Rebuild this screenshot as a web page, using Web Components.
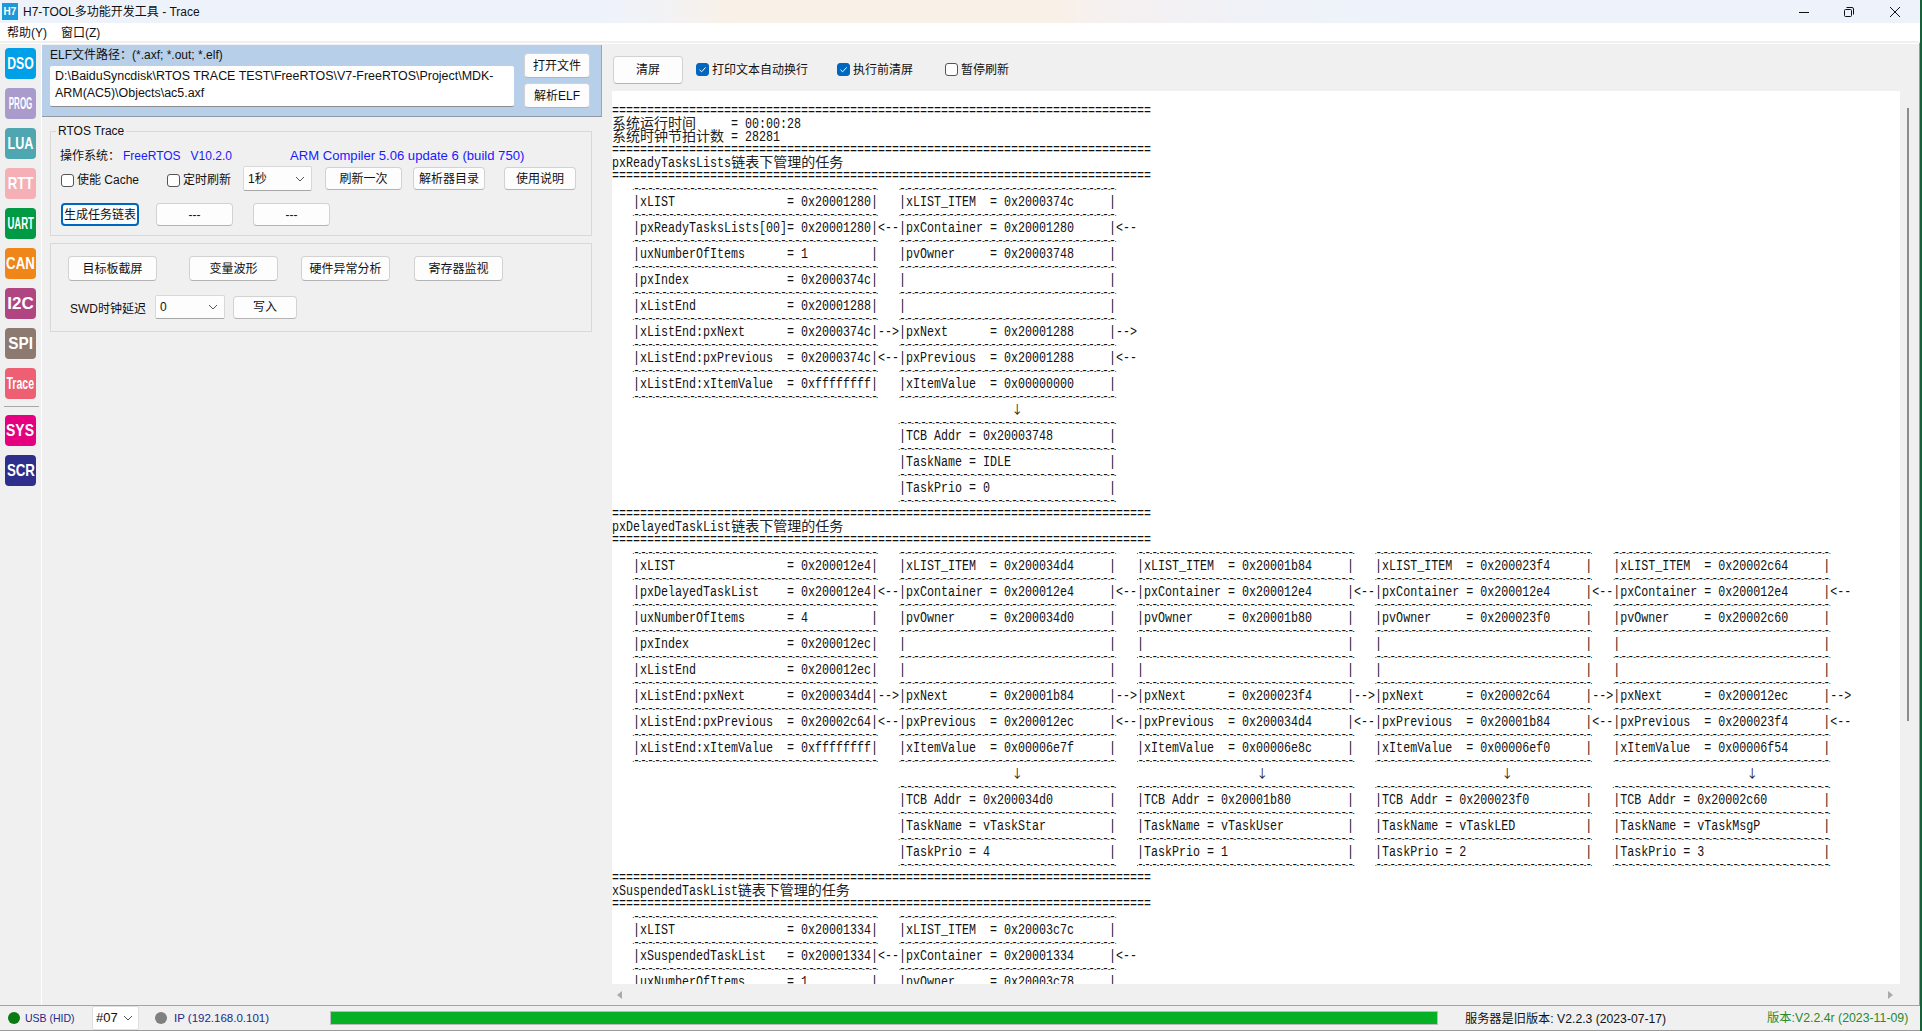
<!DOCTYPE html>
<html lang="zh"><head><meta charset="utf-8"><title>H7-TOOL</title>
<style>
html,body{margin:0;padding:0;height:100%;overflow:hidden;background:#f0f0f0}
body{font:12px/16px "Liberation Sans","Noto Sans CJK SC",sans-serif;color:#111}
</style></head><body>
<h7-app></h7-app>
<script>
function def(name, css, html, init){
  customElements.define(name, class extends HTMLElement{
    connectedCallback(){
      if(this.shadowRoot) return;
      const r=this.attachShadow({mode:'open'});
      r.innerHTML='<style>'+css+'</style>'+(typeof html==='function'?html(this):html);
      if(init) init(this,r);
    }
  });
}
const attr=(e,n,d='')=>e.getAttribute(n)??d;

def('h7-btn',`:host{display:flex;align-items:center;justify-content:center;box-sizing:border-box;background:#fdfdfd;border:1px solid #d2d2d2;border-bottom-color:#b4b4b4;border-radius:4px;font-size:12px;color:#111}
:host([focus]){border:2px solid #0067c0;background:#fafcff}`,`<slot></slot>`);

def('h7-check',`:host{display:inline-flex;align-items:center;gap:3px;font-size:12px}
.b{box-sizing:border-box;width:13px;height:13px;border:1px solid #555;border-radius:3px;background:#fff;display:block}
:host([on]) .b{background:#0067c0;border-color:#0067c0}svg{display:block}`,
e=>`<span class="b">${e.hasAttribute('on')?'<svg width="11" height="11" viewBox="0 0 11 11"><path d="M2.5 5.8 4.6 7.8 8.6 3.4" fill="none" stroke="#fff" stroke-width="1"/></svg>':''}</span><slot></slot>`);

def('h7-select',`:host{display:flex;align-items:center;justify-content:space-between;box-sizing:border-box;background:#fdfdfd;border:1px solid #d8d8d8;border-bottom-color:#a8a8a8;border-radius:2px;padding:0 6px 0 4px;font-size:12px}`,
`<slot></slot><svg width="10" height="6" viewBox="0 0 10 6"><path d="M1 1 5 5 9 1" fill="none" stroke="#555" stroke-width="1"/></svg>`);

def('h7-tile',`:host{display:flex;align-items:center;justify-content:center;width:31px;height:31px;border-radius:4px;overflow:hidden;color:#fff;font:bold 17px/17px "Liberation Sans",sans-serif;background:var(--c)}
span{display:block;white-space:nowrap}`,
e=>`<span style="transform:scaleX(${attr(e,'sx','1')});font-size:${attr(e,'fs','17')}px"><slot></slot></span>`);

def('h7-titlebar',`:host{display:flex;align-items:center;height:23px;flex:none;background:linear-gradient(90deg,#eef3fb 0,#eef3fb 600px,#f3f2f4 670px,#f9f1e7 733px,#f9f1e7 1056px,#f6f0f0 1100px,#eff2f8 1270px,#eef3fb 1400px)}
.logo{width:16px;height:17px;margin-left:2px;background:#1a9ad6;color:#fff;font:bold 10px/17px "Liberation Sans",sans-serif;text-align:center}
.t{margin-left:5px;flex:1}
.w{display:flex;margin-right:22px;align-items:center}
svg{display:block}`,
`<span class="logo">H7</span><span class="t">H7-TOOL多功能开发工具 - Trace</span>
<div class="w">
<svg width="10" height="10" viewBox="0 0 10 10" style="margin-right:35px"><path d="M0 5.5H10" stroke="#111"/></svg>
<svg width="10" height="10" viewBox="0 0 10 10" style="margin-right:36px"><rect x=".5" y="2.5" width="7" height="7" rx="1" fill="none" stroke="#111"/><path d="M2.5 .5H8a1.5 1.5 0 0 1 1.5 1.5V7.5" fill="none" stroke="#111"/></svg>
<svg width="10" height="10" viewBox="0 0 10 10"><path d="M0 0 10 10M10 0 0 10" stroke="#111" stroke-width="1"/></svg>
</div>`);

def('h7-menubar',`:host{display:flex;gap:14px;flex:none;background:#fff;padding:2px 0 0 7px;box-sizing:border-box;height:20px;align-items:center;border-bottom:2px solid #f0f0f0}`,`<slot></slot>`);

def('h7-sidebar',`:host{display:flex;flex-direction:column;align-items:flex-start;gap:9px;box-sizing:border-box;width:42px;flex:none;border-right:1px solid #fff;padding:4px 0 0 5px}`,`<slot></slot>`);

def('h7-sep',`:host{display:block;width:35px;height:1px;background:#a8a8a8;margin:-2px 0 -1px -1px}`,``);

def('h7-elf',`:host{display:flex;box-sizing:border-box;width:560px;height:72px;background:#b8cfe9;border-right:1px solid #9aa6b4;border-bottom:1px solid #8f98a3;padding:0 11px 0 8px}
.l{width:464px;display:flex;flex-direction:column}
.c{height:21px;line-height:20px}
.box{box-sizing:border-box;height:41px;background:#fff;border-bottom:1px solid #8d8d8d;border-radius:2px;padding:2px 5px;line-height:17px;font-size:12.45px}
.r{margin-left:10px;display:flex;flex-direction:column;gap:5px;padding-top:8px;width:66px}
h7-btn{height:25px}`,
`<div class="l"><div class="c">ELF文件路径：(*.axf; *.out; *.elf)</div>
<div class="box">D:\\BaiduSyncdisk\\RTOS TRACE TEST\\FreeRTOS\\V7-FreeRTOS\\Project\\MDK-<br>ARM(AC5)\\Objects\\ac5.axf</div></div>
<div class="r"><h7-btn>打开文件</h7-btn><h7-btn>解析ELF</h7-btn></div>`);

def('h7-group',`:host{display:block;box-sizing:border-box;border:1px solid #d8d8d8;margin-left:8px;width:542px}
.lg{display:block;width:max-content;background:#f0f0f0;padding:0 2px;margin:-9px 0 0 5px;height:16px;line-height:16px;font-size:12px}`,
e=>(e.hasAttribute('legend')?`<span class="lg">${attr(e,'legend')}</span>`:'')+`<slot></slot>`);

def('h7-row',`:host{display:flex;align-items:center}`,`<slot></slot>`);

const blue='color:#1a1aff';
def('h7-left',`:host{display:block;width:570px;flex:none;padding-top:1px}
h7-btn{flex:none}
.g1{margin-top:14px;height:105px;padding:0}
.g2{margin-top:7px;height:89px}`,
`<h7-elf></h7-elf>
<h7-group class="g1" legend="RTOS Trace">
  <h7-row style="margin:8px 0 0 9px;height:17px"><span>操作系统：</span><span style="${blue};margin-left:3px">FreeRTOS</span><span style="${blue};margin-left:10px">V10.2.0</span><span style="${blue};margin-left:58px;font-size:13.1px">ARM Compiler 5.06 update 6 (build 750)</span></h7-row>
  <h7-row style="margin:2px 0 0 10px;height:25px">
    <h7-check style="margin-top:3px">使能 Cache</h7-check>
    <h7-check style="margin:3px 0 0 28px">定时刷新</h7-check>
    <h7-select style="margin-left:12px;width:69px;height:25px">1秒</h7-select>
    <h7-btn style="margin-left:13px;width:77px;height:23px">刷新一次</h7-btn>
    <h7-btn style="margin-left:11px;width:72px;height:23px">解析器目录</h7-btn>
    <h7-btn style="margin-left:19px;width:72px;height:23px">使用说明</h7-btn>
  </h7-row>
  <h7-row style="margin:12px 0 0 10px;height:23px">
    <h7-btn focus style="width:78px;height:23px">生成任务链表</h7-btn>
    <h7-btn style="margin-left:17px;width:77px;height:23px">---</h7-btn>
    <h7-btn style="margin-left:20px;width:77px;height:23px">---</h7-btn>
  </h7-row>
</h7-group>
<h7-group class="g2">
  <h7-row style="margin:12px 0 0 17px;height:25px">
    <h7-btn style="width:89px;height:25px">目标板截屏</h7-btn>
    <h7-btn style="margin-left:32px;width:89px;height:25px">变量波形</h7-btn>
    <h7-btn style="margin-left:23px;width:89px;height:25px">硬件异常分析</h7-btn>
    <h7-btn style="margin-left:24px;width:89px;height:25px">寄存器监视</h7-btn>
  </h7-row>
  <h7-row style="margin:14px 0 0 19px;height:24px">
    <span style="width:85px;padding-top:3px">SWD时钟延迟</span>
    <h7-select style="width:70px;height:24px">0</h7-select>
    <h7-btn style="margin-left:8px;width:64px;height:23px">写入</h7-btn>
  </h7-row>
</h7-group>`);

def('h7-toolbar',`:host{display:flex;align-items:center;box-sizing:border-box;height:47px;flex:none;padding:4px 0 0 1px}
h7-btn{width:70px;height:28px}`,
`<h7-btn>清屏</h7-btn>
<h7-check on style="margin-left:13px">打印文本自动换行</h7-check>
<h7-check on style="margin-left:29px">执行前清屏</h7-check>
<h7-check style="margin-left:32px">暂停刷新</h7-check>`);

/* text-report content */
const pad=(s,n)=>(s+' '.repeat(n)).slice(0,n);
const eqs='='.repeat(77);
function section(title,head,items){
  const L=[eqs,title,eqs];
  const dash=' '.repeat(3)+'-'.repeat(35)+('   '+'-'.repeat(31)).repeat(items.length);
  const labels=['xLIST_ITEM','pxContainer','pvOwner','','','pxNext','pxPrevious','xItemValue'];
  const arrows=['   ','<--','   ','   ','   ','-->','<--','   '];
  L.push(dash);
  head.forEach((a,i)=>{
    const cells=items.map(it=>labels[i]?pad(pad(labels[i],11)+' = '+it[i],29):' '.repeat(29));
    let s='   |'+pad(a[0],21)+'= '+pad(a[1],10)+'|'+arrows[i];
    cells.forEach(c=>{s+='|'+c+'|'+arrows[i];});
    L.push(s.replace(/\s+$/,''));
    L.push(dash);
  });
  return L;
}
function tail(tasks){
  const dash=' '.repeat(41)+tasks.map(()=>'-'.repeat(31)).join('   ');
  const L=[];
  L.push(' '.repeat(57)+tasks.map(()=>'↓').join(' '.repeat(33)));
  L.push(dash);
  [0,1,2].forEach(k=>{
    const names=['TCB Addr = ','TaskName = ','TaskPrio = '];
    L.push(' '.repeat(41)+tasks.map(t=>'|'+pad(names[k]+t[k],29)+'|').join('   '));
    L.push(dash);
  });
  return L;
}
let lines=[''];
lines.push(eqs,'系统运行时间     = 00:00:28','系统时钟节拍计数 = 28281');
lines.push(...section('pxReadyTasksLists链表下管理的任务',
 [['xLIST','0x20001280'],['pxReadyTasksLists[00]','0x20001280'],['uxNumberOfItems','1'],['pxIndex','0x2000374c'],['xListEnd','0x20001288'],['xListEnd:pxNext','0x2000374c'],['xListEnd:pxPrevious','0x2000374c'],['xListEnd:xItemValue','0xffffffff']],
 [['0x2000374c','0x20001280','0x20003748','','','0x20001288','0x20001288','0x00000000']]));
lines.push(...tail([['0x20003748','IDLE','0']]));
const dl=[
 ['0x200034d4','0x200012e4','0x200034d0','','','0x20001b84','0x200012ec','0x00006e7f'],
 ['0x20001b84','0x200012e4','0x20001b80','','','0x200023f4','0x200034d4','0x00006e8c'],
 ['0x200023f4','0x200012e4','0x200023f0','','','0x20002c64','0x20001b84','0x00006ef0'],
 ['0x20002c64','0x200012e4','0x20002c60','','','0x200012ec','0x200023f4','0x00006f54']];
lines.push(...section('pxDelayedTaskList链表下管理的任务',
 [['xLIST','0x200012e4'],['pxDelayedTaskList','0x200012e4'],['uxNumberOfItems','4'],['pxIndex','0x200012ec'],['xListEnd','0x200012ec'],['xListEnd:pxNext','0x200034d4'],['xListEnd:pxPrevious','0x20002c64'],['xListEnd:xItemValue','0xffffffff']],dl));
lines.push(...tail([['0x200034d0','vTaskStar','4'],['0x20001b80','vTaskUser','1'],['0x200023f0','vTaskLED','2'],['0x20002c60','vTaskMsgP','3']]));
lines.push(...section('xSuspendedTaskList链表下管理的任务',
 [['xLIST','0x20001334'],['xSuspendedTaskList','0x20001334'],['uxNumberOfItems','1']],
 [['0x20003c7c','0x20001334','0x20003c78','','','','','']]));
lines=lines.slice(0,69);

def('h7-output',`:host{display:block;flex:1;background:#fff;overflow:hidden;min-height:0}
.p{width:1546px;padding-top:1px;transform:scaleX(.83333);transform-origin:0 0;font:14px/13px "Liberation Mono",monospace;color:#111}
.l{display:block;height:13px;white-space:pre}
.d{display:inline-block;height:13px;vertical-align:top;background:linear-gradient(90deg,#555 0,#555 1.4px,transparent 1.4px,transparent 7px,#555 7px) 0 6px/8.4px 1px repeat-x}
.z{display:inline-block;vertical-align:top;transform:translateY(-2px) scaleX(1.2);transform-origin:0 50%;font:14px/13px "Noto Sans CJK SC",sans-serif;color:#222;white-space:pre}
.z.a{font-size:12px}`,
`<div class="p" id="p"></div>`,
(e,r)=>{
  const p=r.getElementById('p');
  const esc=s=>s.replace(/&/g,'&amp;').replace(/</g,'&lt;').replace(/>/g,'&gt;');
  p.innerHTML=lines.map(t=>{
    if(/^[ -]+$/.test(t)&&t.includes('-')){
      return `<span class="l">${t.split(/(-+)/).map((s,i)=>i%2?`<span class="d">${s}</span>`:s).join('')}</span>`;
    }
    const h=t.split(/([\u4e00-\u9fff↓]+)/).map((s,i)=>{
      if(!(i%2)) return esc(s);
      return `<span class="z${s==='↓'?' a':''}" style="width:${s.length*16.8}px">${s}</span>`;
    }).join('');
    return `<span class="l">${h||' '}</span>`;
  }).join('');
});

def('h7-right',`:host{display:flex;flex-direction:column;flex:1;min-width:0;margin-right:22px}
.sb{height:21px;flex:none;display:flex;justify-content:space-between;align-items:center;padding:0 7px 0 5px;box-sizing:border-box}
svg{display:block}`,
`<h7-toolbar></h7-toolbar><h7-output></h7-output>
<div class="sb"><svg width="5" height="8"><path d="M5 0V8L0 4Z" fill="#aaa"/></svg><svg width="5" height="8"><path d="M0 0V8L5 4Z" fill="#aaa"/></svg></div>`);

def('h7-vscroll',`:host{display:block;width:19px;position:absolute;right:2px;top:43px;bottom:26px;border-right:1px solid #9a9a9a;box-sizing:border-box}
i{position:absolute;left:6px;top:65px;width:2px;height:613px;background:#8c8c8c}`,`<i></i>`);

def('h7-status',`:host{display:flex;align-items:center;height:26px;flex:none;box-sizing:border-box;border-top:1px solid #a4a4a4;border-bottom:1px solid #9a9a9a;background:#f0f0f0}
.d{width:12px;height:12px;border-radius:50%;flex:none}
.t{color:#1b2a8c;font-size:11.5px}
.bar{box-sizing:border-box;width:1108px;height:14px;background:#06b025;border:1px solid #bcbcbc}`,
`<span class="d" style="background:#0a7a12;margin-left:8px"></span>
<span class="t" style="margin-left:5px;width:67px;font-size:10.5px">USB (HID)</span>
<h7-select style="width:47px;height:24px;background:#fff;border-color:#e0e0e0;font-size:13px;padding:0 5px 0 3px">#07</h7-select>
<span class="d" style="background:#808080;margin-left:16px"></span>
<span class="t" style="margin-left:7px;width:156px">IP (192.168.0.101)</span>
<span class="bar"></span>
<span style="margin-left:27px;width:302px;font-size:12.2px;padding-top:2px">服务器是旧版本: V2.2.3 (2023-07-17)</span>
<span style="color:#2a8a2a;font-size:12.3px">版本:V2.2.4r (2023-11-09)</span>`);

def('h7-app',`:host{display:flex;flex-direction:column;height:1031px;width:1922px;position:relative;background:#f0f0f0;overflow:hidden}
.m{display:flex;flex:1;min-height:0;border-top:1px solid #fff}
.strip{position:absolute;right:0;top:0;bottom:0;width:2px;background:#17603a}`,
`<h7-titlebar></h7-titlebar>
<h7-menubar><span>帮助(Y)</span><span>窗口(Z)</span></h7-menubar>
<div class="m">
 <h7-sidebar>
  <h7-tile style="--c:#00a0e9" sx=".72" >DSO</h7-tile>
  <h7-tile style="--c:#a99bcb" sx=".5" fs="16">PROG</h7-tile>
  <h7-tile style="--c:#4ea7b0" sx=".74">LUA</h7-tile>
  <h7-tile style="--c:#f5b0b5" sx=".78">RTT</h7-tile>
  <h7-tile style="--c:#009944" sx=".56">UART</h7-tile>
  <h7-tile style="--c:#f08519" sx=".78">CAN</h7-tile>
  <h7-tile style="--c:#b04582" sx="1">I2C</h7-tile>
  <h7-tile style="--c:#8c7a70" sx=".9">SPI</h7-tile>
  <h7-tile style="--c:#ee5f73" sx=".62">Trace</h7-tile>
  <h7-sep></h7-sep>
  <h7-tile style="--c:#e4007f" sx=".82">SYS</h7-tile>
  <h7-tile style="--c:#2e2e8c" sx=".78">SCR</h7-tile>
 </h7-sidebar>
 <h7-left></h7-left>
 <h7-right></h7-right>
</div>
<h7-vscroll></h7-vscroll>
<h7-status></h7-status>
<span class="strip"></span>`);
</script>
</body></html>
